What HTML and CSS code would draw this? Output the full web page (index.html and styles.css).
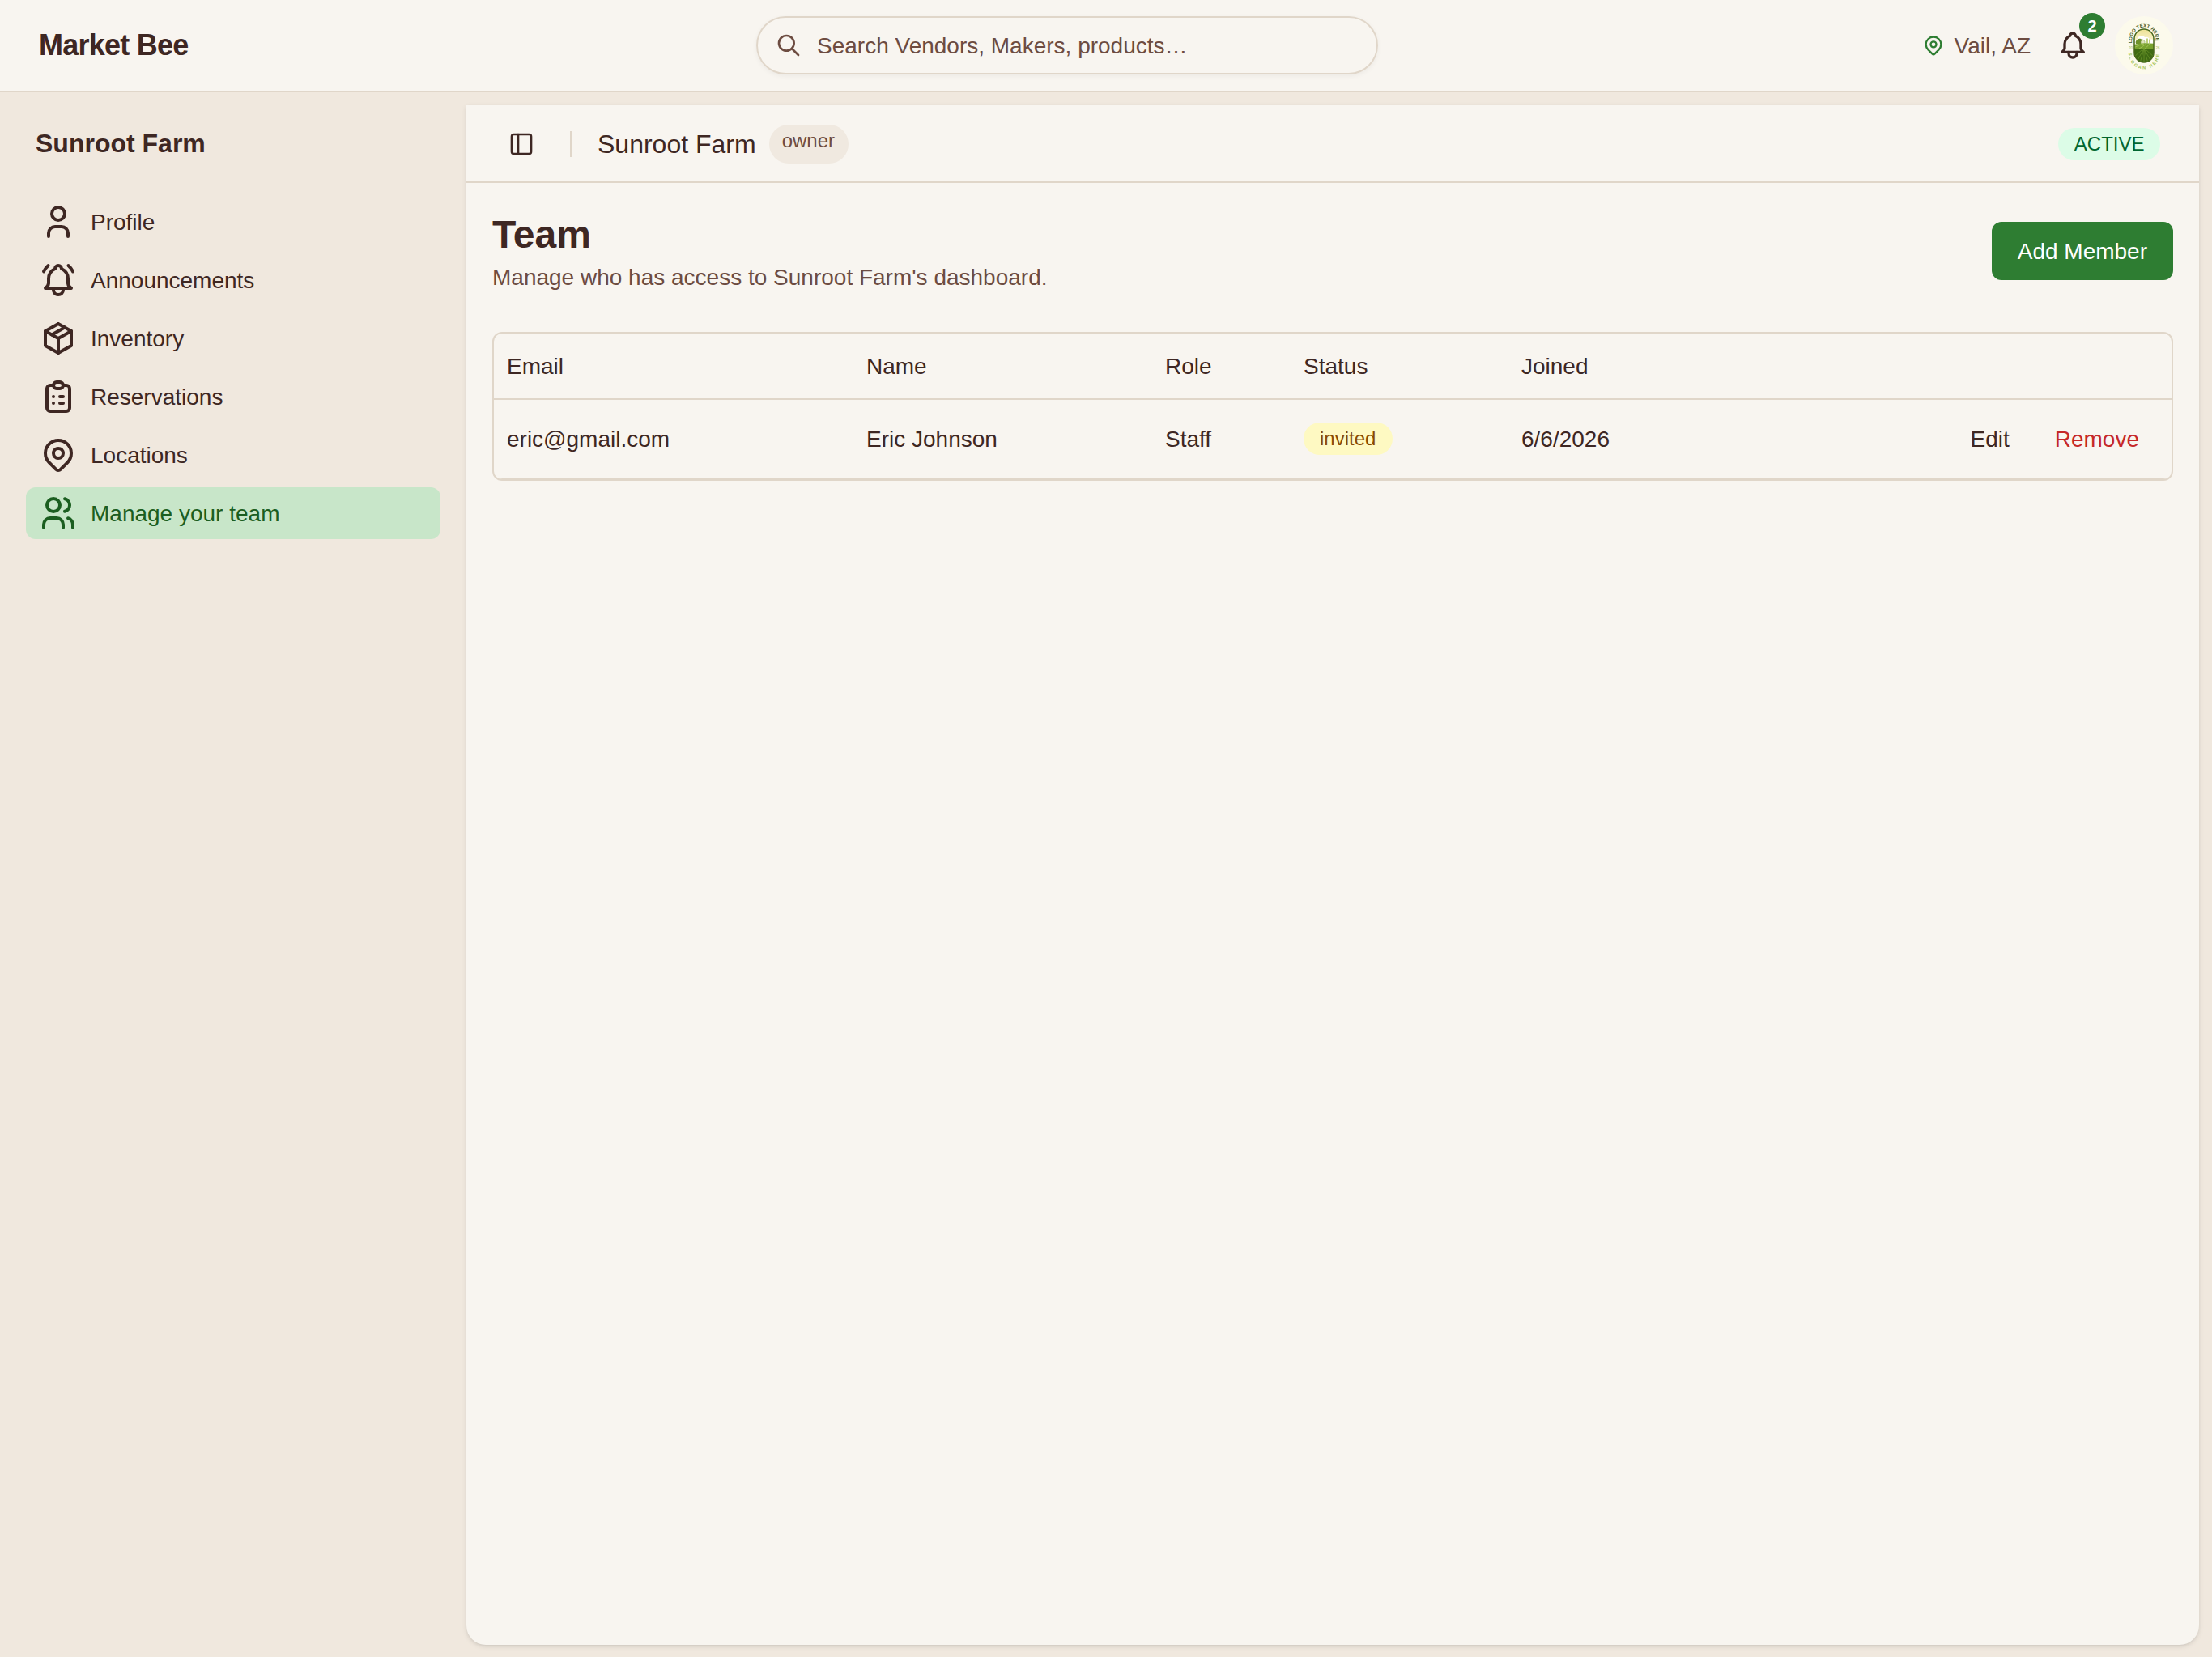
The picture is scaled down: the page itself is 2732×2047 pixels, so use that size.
FILE: index.html
```html
<!DOCTYPE html>
<html lang="en">
<head>
<meta charset="UTF-8" />
<meta name="viewport" content="width=device-width, initial-scale=1.0" />
<title>Market Bee - Team</title>
<link rel="stylesheet" href="styles.css">
</head>

<body>
<header class="topbar">
<a class="brand">Market Bee</a>

<div class="search">
<svg class="icon icon-search" viewBox="0 0 24 24">
<path d="M3 10a7 7 0 1 0 14 0a7 7 0 1 0 -14 0" />
<path d="M21 21l-6 -6" />
</svg>
<span>Search Vendors, Makers, products…</span>
</div>

<div class="topbar-right">
<div class="location">
<svg class="icon icon-location" viewBox="0 0 24 24">
<path d="M9 11a3 3 0 1 0 6 0a3 3 0 0 0 -6 0" />
<path d="M17.657 16.657l-4.243 4.243a2 2 0 0 1 -2.827 0l-4.244 -4.243a8 8 0 1 1 11.314 0z" />
</svg>
<span>Vail, AZ</span>
</div>

<div class="notifications">
<svg class="icon icon-bell" viewBox="0 0 24 24">
<path d="M10 5a2 2 0 1 1 4 0a7 7 0 0 1 4 6v3a4 4 0 0 0 2 3h-16a4 4 0 0 0 2 -3v-3a7 7 0 0 1 4 -6" />
<path d="M9 17v1a3 3 0 0 0 6 0v-1" />
</svg>
<span class="count">2</span>
</div>

<!-- Farm logo -->
<svg class="avatar" viewBox="0 0 72 72">
<defs>
<clipPath id="capsule"><rect x="24" y="16" width="24" height="41" rx="12" /></clipPath>
<linearGradient id="sky" x1="0" y1="0" x2="0" y2="1">
<stop offset="0" stop-color="#ece08f" />
<stop offset="1" stop-color="#fffdf0" />
</linearGradient>
<path id="arc-top" d="M21.5 33.5V29a14.5 15.5 0 0 1 29 0V33.5" />
<path id="arc-bottom" d="M17.3 45V47a18.7 18.5 0 0 0 37.4 0V45" />
</defs>
<circle cx="36" cy="36" r="36" fill="#fcfaec" />
<g clip-path="url(#capsule)">
<rect x="23" y="15" width="26" height="24" fill="url(#sky)" />
<path d="M23 33a4 4 0 0 1 5 -4a5 5 0 0 1 9 -3a5 5 0 0 1 6 3a4 4 0 0 1 6 3v4H23z" fill="#fff" />
<path d="M26 34a4 4 0 0 1 2 -5a3.5 3.5 0 0 1 6 1v4z" fill="#6f922c" />
<path d="M32 31l2.500 -2l2.500 2v4h-5z" fill="#dfe5bd" stroke="#7c9a3c" stroke-width=".5" />
<path d="M40 27.500v6M43 28.500v5" stroke="#a4bb45" stroke-width="1.400" />
<path d="M23 35q12 -3 26 -1v9H23z" fill="#78a22f" />
<path d="M23 39q8 -4 13 -5M27 42q8 -5 12 -8M35 42q5 -4 8 -8" stroke="#a9c65a" stroke-width=".8" fill="none" />
<rect x="23" y="41" width="26" height="18" fill="#3f6a13" />
<path d="M36 40L26 58M36 40L31 58M36 40V58M36 40L41 58M36 40L46 58M34 41L23 51M38 41L49 51" stroke="#6d962c" stroke-width=".7" />
</g>
<rect x="24" y="16" width="24" height="41" rx="12" fill="none" stroke="#48671d" stroke-width="1.500" />
<text class="logo-text"><textPath href="#arc-top" textLength="53" lengthAdjust="spacing">LOGO TEXT HERE</textPath></text>
<text class="logo-slogan"><textPath href="#arc-bottom" textLength="60" lengthAdjust="spacing">SLOGAN HERE</textPath></text>
<text class="logo-year" x="17" y="41">20</text>
<text class="logo-year" x="50.500" y="41">26</text>
</svg>
</div>
</header>

<div class="layout">
<aside class="sidebar">
<h2 class="sidebar-title">Sunroot Farm</h2>
<nav class="menu">
<a class="menu-item">
<svg class="icon" viewBox="0 0 24 24">
<path d="M8 7a4 4 0 1 0 8 0a4 4 0 0 0 -8 0" />
<path d="M6 21v-2a4 4 0 0 1 4 -4h4a4 4 0 0 1 4 4v2" />
</svg>
<span>Profile</span>
</a>
<a class="menu-item">
<svg class="icon" viewBox="0 0 24 24">
<path d="M10 5a2 2 0 0 1 4 0a7 7 0 0 1 4 6v3a4 4 0 0 0 2 3h-16a4 4 0 0 0 2 -3v-3a7 7 0 0 1 4 -6" />
<path d="M9 17v1a3 3 0 0 0 6 0v-1" />
<path d="M21 6.727a11.05 11.05 0 0 0 -2.794 -3.727" />
<path d="M3 6.727a11.05 11.05 0 0 1 2.792 -3.727" />
</svg>
<span>Announcements</span>
</a>
<a class="menu-item">
<svg class="icon" viewBox="0 0 24 24">
<path d="M12 3l8 4.5v9l-8 4.5l-8 -4.5v-9l8 -4.5" />
<path d="M12 12l8 -4.5" />
<path d="M12 12v9" />
<path d="M12 12l-8 -4.5" />
<path d="M16 5.250l-8 4.500" />
</svg>
<span>Inventory</span>
</a>
<a class="menu-item">
<svg class="icon" viewBox="0 0 24 24">
<path d="M9 5h-2a2 2 0 0 0 -2 2v12a2 2 0 0 0 2 2h10a2 2 0 0 0 2 -2v-12a2 2 0 0 0 -2 -2h-2" />
<path d="M9 5a2 2 0 0 1 2 -2h2a2 2 0 0 1 2 2a2 2 0 0 1 -2 2h-2a2 2 0 0 1 -2 -2z" />
<path d="M9 12h.01" />
<path d="M13 12h2" />
<path d="M9 16h.01" />
<path d="M13 16h2" />
</svg>
<span>Reservations</span>
</a>
<a class="menu-item">
<svg class="icon" viewBox="0 0 24 24">
<path d="M9 11a3 3 0 1 0 6 0a3 3 0 0 0 -6 0" />
<path d="M17.657 16.657l-4.243 4.243a2 2 0 0 1 -2.827 0l-4.244 -4.243a8 8 0 1 1 11.314 0z" />
</svg>
<span>Locations</span>
</a>
<a class="menu-item active">
<svg class="icon" viewBox="0 0 24 24">
<path d="M5 7a4 4 0 1 0 8 0a4 4 0 1 0 -8 0" />
<path d="M3 21v-2a4 4 0 0 1 4 -4h4a4 4 0 0 1 4 4v2" />
<path d="M16 3.130a4 4 0 0 1 0 7.750" />
<path d="M21 21v-2a4 4 0 0 0 -3 -3.850" />
</svg>
<span>Manage your team</span>
</a>
</nav>
</aside>

<main class="panel">
<div class="panel-header">
<svg class="icon icon-toggle" viewBox="0 0 24 24">
<rect x="3" y="3" width="18" height="18" rx="2" />
<path d="M9 3v18" />
</svg>
<div class="divider"></div>
<span class="farm-name">Sunroot Farm</span>
<span class="badge badge-owner">owner</span>
<span class="badge badge-active">ACTIVE</span>
</div>

<div class="content">
<div class="title-row">
<div>
<h1>Team</h1>
<p>Manage who has access to Sunroot Farm's dashboard.</p>
</div>
<button class="btn-add">Add Member</button>
</div>

<div class="table-box">
<table>
<colgroup>
<col class="col-email" />
<col class="col-name" />
<col class="col-role" />
<col class="col-status" />
<col />
<col />
</colgroup>
<thead>
<tr>
<th>Email</th>
<th>Name</th>
<th>Role</th>
<th>Status</th>
<th>Joined</th>
<th></th>
</tr>
</thead>
<tbody>
<tr>
<td>eric@gmail.com</td>
<td>Eric Johnson</td>
<td>Staff</td>
<td class="cell-status"><span class="badge badge-invited">invited</span></td>
<td>6/6/2026</td>
<td>
<div class="actions">
<button class="btn-text">Edit</button>
<button class="btn-text btn-remove">Remove</button>
</div>
</td>
</tr>
</tbody>
</table>
</div>
</div>
</main>
</div>
</body>
</html>
```

FILE: styles.css
```css
* {
box-sizing: border-box;
}

body {
margin: 0;
height: 100vh;
display: flex;
flex-direction: column;
background-color: #f0e8de;
color: #3e2723;
font-family: "Liberation Sans", Arial, sans-serif;
font-size: 28px;
line-height: 40px;
overflow: hidden;
}

h1,
h2,
p {
margin: 0;
}

button {
font: inherit;
border: none;
cursor: pointer;
}

.icon {
width: 48px;
height: 48px;
flex-shrink: 0;
fill: none;
stroke: currentColor;
stroke-width: 2;
stroke-linecap: round;
stroke-linejoin: round;
}

/* Top bar */
.topbar {
display: flex;
align-items: center;
height: 114px;
flex-shrink: 0;
padding: 0 48px;
background-color: #f8f5f0;
border-bottom: 2px solid #e0d6c9;
}

.brand {
width: 886px;
font-size: 36px;
font-weight: bold;
letter-spacing: -0.75px;
}

.search {
display: flex;
align-items: center;
gap: 19px;
width: 768px;
height: 72px;
padding: 0 22px;
border: 2px solid #e0d6c9;
border-radius: 36px;
color: #6d4c41;
box-shadow: 0 2px 6px rgba(0, 0, 0, 0.05);
}

/* Centre the text on the icons */
.search span,
.location span,
.menu-item span {
padding-top: 2px;
}

.icon-search {
width: 32px;
height: 32px;
}

.topbar-right {
display: flex;
align-items: center;
gap: 32px;
margin-left: auto;
}

.location {
display: flex;
align-items: center;
gap: 12px;
color: #6d4c41;
}

.icon-location {
width: 28px;
height: 28px;
color: #2e7d32;
}

.notifications {
position: relative;
display: flex;
}

.icon-bell {
width: 40px;
height: 40px;
}

.count {
position: absolute;
top: -20px;
right: -20px;
width: 32px;
height: 32px;
border-radius: 50%;
background-color: #2e7d32;
color: white;
font-size: 20px;
font-weight: bold;
line-height: 33px;
text-align: center;
}

.avatar {
width: 72px;
height: 72px;
}

.logo-text {
font-size: 6px;
font-weight: bold;
fill: #44592a;
}

.logo-slogan {
font-size: 5.5px;
font-weight: bold;
fill: #a5c455;
}

.logo-year {
font-size: 4.5px;
fill: #a5bd60;
}

/* Page layout */
.layout {
display: flex;
flex: 1;
}

.sidebar {
width: 576px;
padding: 43px 32px;
}

.sidebar-title {
padding-left: 12px;
font-size: 32px;
}

.menu {
display: flex;
flex-direction: column;
gap: 8px;
margin-top: 45px;
}

.menu-item {
display: flex;
align-items: center;
gap: 16px;
height: 64px;
padding: 0 16px;
border-radius: 12px;
}

.menu-item.active {
background-color: #c8e6c9;
color: #1b5e20;
}

.panel {
flex: 1;
margin: 16px 16px 15px 0;
background-color: #f8f5f0;
border-radius: 0 0 24px 24px;
box-shadow: 0 2px 6px rgba(0, 0, 0, 0.1), 0 2px 4px -2px rgba(0, 0, 0, 0.1);
}

.panel-header {
display: flex;
align-items: center;
height: 96px;
padding: 2px 48px 0 52px;
border-bottom: 2px solid #e0d6c9;
}

.icon-toggle {
width: 32px;
height: 32px;
}

.divider {
width: 2px;
height: 32px;
margin: 0 32px 0 44px;
background-color: #e0d6c9;
}

.farm-name {
margin-right: 16px;
font-size: 32px;
}

/* Badges */
.badge {
display: block;
width: fit-content;
padding: 4px 20px;
border-radius: 24px;
font-size: 24px;
line-height: 32px;
}

.badge-owner {
min-width: 98px;
padding: 4px 16px 12px;
background-color: #f0e9e0;
color: #6d4c41;
}

.badge-active {
margin-left: auto;
padding: 4px 19.5px;
background-color: #dcfce7;
color: #016630;
}

.badge-invited {
min-width: 110px;
background-color: #fef9c2;
color: #894b00;
}

/* Team page */
.content {
padding: 32px;
}

.title-row {
display: flex;
align-items: center;
justify-content: space-between;
margin-bottom: 48px;
}

.title-row h1 {
font-size: 48px;
line-height: 64px;
}

.title-row p {
height: 40px;
padding-top: 1px;
color: #6d4c41;
}

.btn-add {
height: 72px;
padding: 2px 32px 0;
border-radius: 12px;
background-color: #2e7d32;
color: white;
}

/* Members table */
.table-box {
border: 2px solid #e0d6c9;
border-radius: 12px;
overflow: hidden;
}

table {
width: 100%;
table-layout: fixed;
border-collapse: separate;
border-spacing: 0;
}

th,
td {
padding: 2px 16px 0;
border-bottom: 2px solid #e0d6c9;
text-align: left;
font-weight: normal;
}

th {
height: 82px;
}

td {
height: 98px;
}

td.cell-status {
padding-top: 0;
}

.col-email {
width: 444px;
}

.col-name {
width: 369px;
}

.col-role {
width: 171px;
}

.col-status {
width: 269px;
}

.actions {
display: flex;
justify-content: flex-end;
gap: 8px;
}

.btn-text {
height: 64px;
padding: 0 24px;
background: none;
color: #3e2723;
}

.btn-remove {
color: #c62828;
}
```
